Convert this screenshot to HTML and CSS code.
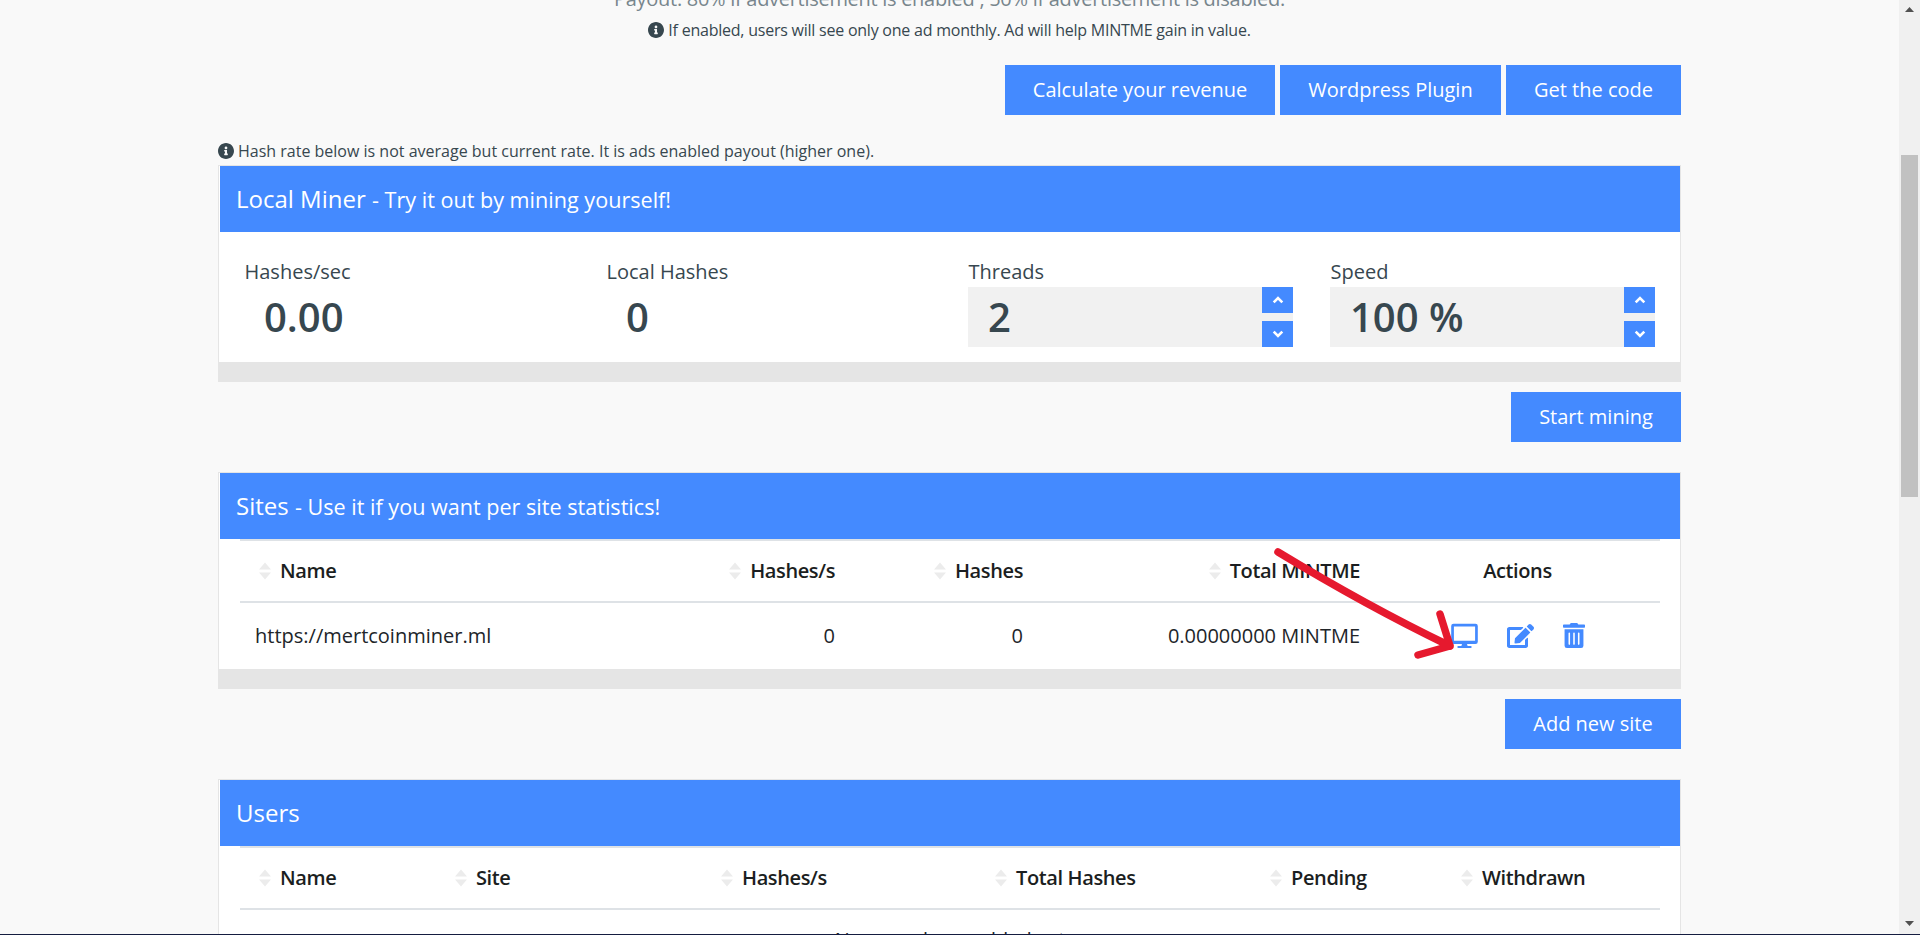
FILE: index.html
```html
<!DOCTYPE html>
<html lang="en">
<head>
<meta charset="utf-8">
<title>Miner dashboard</title>
<link rel="stylesheet" href="styles.css">
</head>
<body>
<svg class="defs" aria-hidden="true">
  <symbol id="info" viewBox="8 8 496 496"><path fill="currentColor" d="M256 8C119.043 8 8 119.083 8 256c0 136.997 111.043 248 248 248s248-111.003 248-248C504 119.083 392.957 8 256 8zm0 110c23.196 0 42 18.804 42 42s-18.804 42-42 42-42-18.804-42-42 18.804-42 42-42zm56 254c0 6.627-5.373 12-12 12h-88c-6.627 0-12-5.373-12-12v-24c0-6.627 5.373-12 12-12h12v-64h-12c-6.627 0-12-5.373-12-12v-24c0-6.627 5.373-12 12-12h64c6.627 0 12 5.373 12 12v100h12c6.627 0 12 5.373 12 12v24z"/></symbol>
  <symbol id="sort" viewBox="0 0 12 18"><path fill="#ececec" d="M6 0.500L12 7.500H0zM0 10.500H12L6 17.500z"/></symbol>
  <symbol id="up" viewBox="0 0 12 8"><path d="M1.700 6.300L6 2L10.300 6.300" fill="none" stroke="#fff" stroke-width="2.600"/></symbol>
  <symbol id="down" viewBox="0 0 12 8"><path d="M1.700 1.700L6 6L10.300 1.700" fill="none" stroke="#fff" stroke-width="2.600"/></symbol>
</svg>
<main class="page">
  <div class="container">
    <div class="payout">Payout: 80% if advertisement is enabled , 50% if advertisement is disabled.</div>
    <div class="note note-center"><svg class="info"><use href="#info"/></svg><span>If enabled, users will see only one ad monthly. Ad will help MINTME gain in value.</span></div>
    <div class="actions actions-top">
      <button class="btn w-calc">Calculate your revenue</button>
      <button class="btn w-word">Wordpress Plugin</button>
      <button class="btn w-code">Get the code</button>
    </div>
    <div class="note note-left"><svg class="info"><use href="#info"/></svg><span>Hash rate below is not average but current rate. It is ads enabled payout (higher one).</span></div>

    <section class="card">
      <h2 class="card-head">Local Miner <small>- Try it out by mining yourself!</small></h2>
      <div class="stats">
        <div class="stat"><div class="label">Hashes/sec</div><div class="value">0.00</div></div>
        <div class="stat"><div class="label">Local Hashes</div><div class="value">0</div></div>
        <div class="stat"><div class="label">Threads</div>
          <div class="value field">2<div class="spin"><span><svg><use href="#up"/></svg></span><span><svg><use href="#down"/></svg></span></div></div></div>
        <div class="stat"><div class="label">Speed</div>
          <div class="value field">100 %<div class="spin"><span><svg><use href="#up"/></svg></span><span><svg><use href="#down"/></svg></span></div></div></div>
      </div>
      <div class="card-foot"></div>
    </section>
    <div class="actions"><button class="btn w-start">Start mining</button></div>

    <section class="card">
      <h2 class="card-head">Sites <small>- Use it if you want per site statistics!</small></h2>
      <table class="table sites">
        <colgroup><col class="s1"><col class="s2"><col class="s3"><col class="s4"><col class="s5"></colgroup>
        <thead><tr>
          <th><svg class="sort"><use href="#sort"/></svg>Name</th>
          <th class="right"><svg class="sort"><use href="#sort"/></svg>Hashes/s</th>
          <th class="right"><svg class="sort"><use href="#sort"/></svg>Hashes</th>
          <th class="right"><svg class="sort"><use href="#sort"/></svg>Total MINTME</th>
          <th class="center">Actions</th>
        </tr></thead>
        <tbody><tr>
          <td>https://mertcoinminer.ml</td>
          <td class="right">0</td>
          <td class="right">0</td>
          <td class="right">0.00000000 MINTME</td>
          <td><div class="icons">
            <svg width="27" height="26" viewBox="0 0 27 26"><path fill="#448aff" fill-rule="evenodd" d="M2.500 0.800h22a2.300 2.300 0 0 1 2.300 2.300v15.700a2.300 2.300 0 0 1-2.300 2.300H16l.6 1.800h3a1.100 1.100 0 0 1 0 2.200H7.400a1.100 1.100 0 0 1 0-2.200h3l.6-1.800H2.500a2.300 2.300 0 0 1-2.300-2.300V3.100A2.300 2.300 0 0 1 2.500.8zM2.900 3.600v14.200h21.200V3.600z"/></svg>
            <svg width="27" height="26" viewBox="0 0 576 512"><path fill="#448aff" d="M402.600 83.200l90.200 90.200c3.800 3.800 3.800 10 0 13.800L274.400 405.600l-92.800 10.300c-12.400 1.400-22.900-9.100-21.500-21.500l10.300-92.800L388.800 83.200c3.800-3.800 10-3.800 13.800 0zm162-22.900l-48.800-48.800c-15.200-15.200-39.900-15.200-55.200 0l-35.400 35.400c-3.800 3.800-3.800 10 0 13.800l90.200 90.200c3.800 3.800 10 3.800 13.800 0l35.400-35.400c15.200-15.300 15.200-40 0-55.200zM384 346.200V448H64V128h229.800c3.200 0 6.200-1.300 8.500-3.500l40-40c7.600-7.600 2.200-20.500-8.500-20.500H48C21.500 64 0 85.500 0 112v352c0 26.500 21.500 48 48 48h352c26.500 0 48-21.500 48-48V306.200c0-10.700-12.900-16-20.500-8.500l-40 40c-2.200 2.300-3.500 5.300-3.500 8.500z"/></svg>
            <svg class="trash" width="22" height="25" viewBox="0 0 448 512" preserveAspectRatio="none"><path fill="#448aff" d="M32 464a48 48 0 0 0 48 48h288a48 48 0 0 0 48-48V128H32zm272-256a16 16 0 0 1 32 0v224a16 16 0 0 1-32 0zm-96 0a16 16 0 0 1 32 0v224a16 16 0 0 1-32 0zm-96 0a16 16 0 0 1 32 0v224a16 16 0 0 1-32 0zM432 32H312l-9.400-18.700A24 24 0 0 0 281.100 0H166.800a23.720 23.720 0 0 0-21.400 13.300L136 32H16A16 16 0 0 0 0 48v32a16 16 0 0 0 16 16h416a16 16 0 0 0 16-16V48a16 16 0 0 0-16-16z"/></svg>
          </div></td>
        </tr></tbody>
      </table>
      <div class="card-foot"></div>
      <svg class="arrow" width="190" height="120" viewBox="0 0 190 120"><path d="M9 9C65 43 125 76 181 103M171 71L181 103L149 112" fill="none" stroke="#e6192e" stroke-width="7.500" stroke-linecap="round" stroke-linejoin="round"/></svg>
    </section>
    <div class="actions"><button class="btn w-add">Add new site</button></div>

    <section class="card">
      <h2 class="card-head">Users</h2>
      <table class="table users">
        <colgroup><col class="u1"><col class="u2"><col class="u3"><col class="u4"><col class="u5"><col class="u6"></colgroup>
        <thead><tr>
          <th><svg class="sort"><use href="#sort"/></svg>Name</th>
          <th><svg class="sort"><use href="#sort"/></svg>Site</th>
          <th><svg class="sort"><use href="#sort"/></svg>Hashes/s</th>
          <th><svg class="sort"><use href="#sort"/></svg>Total Hashes</th>
          <th><svg class="sort"><use href="#sort"/></svg>Pending</th>
          <th><svg class="sort"><use href="#sort"/></svg>Withdrawn</th>
        </tr></thead>
        <tbody><tr><td colspan="6" class="center empty">No users have added yet</td></tr></tbody>
      </table>
    </section>
  </div>
  <div class="scrollbar">
    <svg width="9" height="5" viewBox="0 0 9 5"><path d="M0 5L4.500 0L9 5z" fill="#505050"/></svg>
    <div class="thumb"></div>
    <svg width="9" height="5" viewBox="0 0 9 5"><path d="M0 0L4.500 5L9 0z" fill="#505050"/></svg>
  </div>
</main>
<div class="edge"></div>
</body>
</html>
```
FILE: styles.css
```css
* { box-sizing: border-box; }
body { margin: 0; height: 935px; overflow: hidden; background: #f9f9f9; font-family: "Open Sans", sans-serif; font-size: 20px; line-height: 30px; color: #37474f; }
.defs { position: absolute; width: 0; height: 0; }
.page { display: flex; justify-content: space-between; height: 934px; overflow: hidden; padding-left: 218px; }
.container { width: 1463px; }
.payout { height: 15px; display: flex; align-items: flex-end; justify-content: center; color: #78868d; white-space: nowrap; line-height: 33px; letter-spacing: -0.29px; }
.note { display: flex; align-items: center; gap: 4px; height: 30px; font-size: 16px; white-space: nowrap; }
.note-center { justify-content: center; letter-spacing: -0.23px; }
.info { width: 16px; height: 16px; }
.actions { display: flex; justify-content: flex-end; gap: 5px; margin-top: 10px; margin-bottom: 30px; }
.actions-top { margin-top: 20px; margin-bottom: 21px; }
.note-left { height: 29px; }
.btn { height: 50px; padding: 0; border: 0; background: #448aff; color: #fff; font: 20px/50px "Open Sans", sans-serif; white-space: nowrap; }
.w-calc { width: 270px; }
.w-word { width: 221px; }
.w-code { width: 175px; }
.w-start { width: 170px; }
.w-add { width: 176px; }
.card { position: relative; border: 1px solid #e5e5e5; border-bottom: 0; background: #fff; }
.card-head { height: 66px; margin: 0 0 0 1px; padding-left: 16px; background: #448aff; color: #fff; font-size: 24px; font-weight: 400; line-height: 66px; white-space: nowrap; }
.card-head small { font-size: 21.6px; }
.card-foot { height: 20px; margin: 0 -1px; background: #e5e5e5; }
.stats { display: grid; grid-template-columns: repeat(4, 325px); column-gap: 37px; height: 130px; padding: 25px 0 0 25px; }
.label { height: 30px; padding-left: 0.5px; }
.value { height: 60px; padding-left: 20px; font-size: 40px; line-height: 60px; font-weight: 600; white-space: nowrap; }
.field { display: flex; justify-content: space-between; background: #f1f1f1; }
.spin { display: flex; flex-direction: column; justify-content: space-between; }
.spin span { display: flex; align-items: center; justify-content: center; width: 31px; height: 26px; background: #448aff; }
.spin svg { width: 12px; height: 8px; }
.table { width: 1420px; margin-left: 21px; table-layout: fixed; border-collapse: separate; border-spacing: 0; color: #212529; }
.table th { height: 64px; padding: 0 15px; border-top: 2px solid #dee2e6; border-bottom: 2px solid #dee2e6; text-align: left; font-weight: 600; white-space: nowrap; letter-spacing: -0.38px; color: #1b1e21; }
.table td { height: 66px; padding: 0 15px; white-space: nowrap; }
.table .empty { height: 60px; }
.table .right { text-align: right; }
.table .center { text-align: center; }
.sort { width: 12px; height: 18px; margin: 0 9px 0 4px; vertical-align: -2px; }
.s1 { width: 435px; } .s2 { width: 175px; } .s3 { width: 188px; } .s4 { width: 337px; } .s5 { width: 285px; }
.u1 { width: 196px; } .u2 { width: 266px; } .u3 { width: 274px; } .u4 { width: 275px; } .u5 { width: 191px; } .u6 { width: 218px; }
.icons { display: flex; justify-content: center; gap: 29px; }
.arrow { position: absolute; left: 1050px; top: 70px; }
.scrollbar { display: flex; flex-direction: column; align-items: center; width: 21px; padding: 7px 0 8px; background: #f0f0f0; }
.thumb { width: 17px; height: 342px; margin: 143px 0 auto; background: #c1c1c1; }
.edge { height: 1px; background: #151d40; }
```
